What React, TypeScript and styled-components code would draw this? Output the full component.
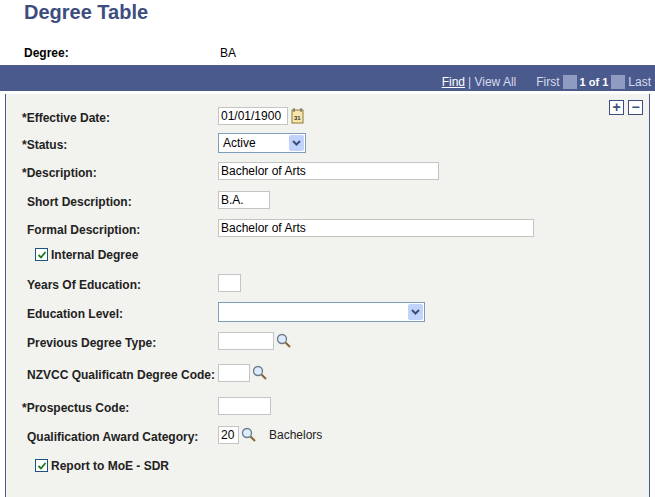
import React from 'react';
import styled, { createGlobalStyle } from 'styled-components';

const Global = createGlobalStyle`
  body { margin: 0; background: #fff; font-family: Arial, "Liberation Sans", sans-serif; font-size: 12px; color: #000; overflow: hidden; }
`;

const Page = styled.div`
  width: 655px;
  height: 497px;
  position: relative;
`;

const Title = styled.h1`
  margin: 0;
  padding: 1px 0 0 24px;
  height: 39px;
  font-size: 20px;
  font-weight: bold;
  color: #3c4d7e;
`;

const KeyRow = styled.div`
  display: flex;
  height: 25px;
  align-items: center;
  padding-left: 24px;
  font-size: 12px;
`;

const KeyLabel = styled.span`
  width: 196px;
  font-weight: bold;
`;

const Panel = styled.div`
  margin: 0 5px 0 5px;
  border: 1px solid #4a5a8c;
  border-top: none;
  background: #f2f2ee;
  height: 404px;
`;

const Bar = styled.div`
  height: 24px;
  background: #4a5a8c;
  display: flex;
  justify-content: flex-end;
  align-items: flex-end;
  padding: 0 4px 2px 0;
  color: #d6dcec;
  font-size: 12px;
  border-bottom: 3px solid #fff;
`;

const Nav = styled.span<{ $gap?: number }>`
  margin-left: ${p => p.$gap ?? 0}px;
  display: inline-flex;
  align-items: center;
  gap: 3px;
  u { color: #fff; font-weight: normal; }
  b { color: #fff; font-size: 11px; }
`;

const Arrow = styled.span`
  display: inline-block;
  width: 14px;
  height: 14px;
  background: #8f9bc0;
`;

const Body = styled.div`
  position: relative;
  padding-top: 9px;
`;

const AddDel = styled.div`
  position: absolute;
  right: 6px;
  top: 6px;
  display: flex;
  gap: 4px;
`;

const SqBtn = styled.span`
  width: 13px;
  height: 13px;
  border: 1px solid #3c4d7e;
  background: #fff;
  color: #3c4d7e;
  font-size: 14px;
  line-height: 12px;
  text-align: center;
  font-weight: bold;
`;

const Row = styled.div<{ $h: number }>`
  display: flex;
  align-items: center;
  height: ${p => p.$h}px;
`;

const Label = styled.div<{ $ind?: boolean }>`
  width: ${p => (p.$ind ? 191 : 196)}px;
  padding-left: ${p => (p.$ind ? 21 : 16)}px;
  font-weight: bold;
  font-size: 12px;
  color: #222;
  padding-top: 4px;
`;

const Input = styled.div<{ $w: number }>`
  width: ${p => p.$w}px;
  height: 18px;
  background: #fff;
  border: 1px solid #c4c4c4;
  box-sizing: border-box;
  font-size: 12px;
  line-height: 16px;
  padding-left: 2px;
`;

const Select = styled.div<{ $w: number }>`
  width: ${p => p.$w}px;
  height: 20px;
  background: #fff;
  border: 1px solid #7f9db9;
  box-sizing: border-box;
  display: flex;
  align-items: center;
  justify-content: space-between;
  padding: 0 1px 0 4px;
  font-size: 12px;
`;

const DropBtn = styled.span`
  width: 15px;
  height: 16px;
  background: #c1d3fb;
  border-radius: 2px;
  display: flex;
  align-items: center;
  justify-content: center;
`;

const Check = styled.div`
  display: flex;
  align-items: center;
  gap: 3px;
  padding-left: 29px;
  font-weight: bold;
  font-size: 12px;
  color: #222;
`;

const Box = styled.span`
  width: 11px;
  height: 11px;
  border: 1px solid #1c5180;
  background: #fff;
  display: flex;
  align-items: center;
  justify-content: center;
`;

const Desc = styled.span`
  margin-left: 12px;
  font-size: 12px;
  color: #222;
`;

const Glass = () => (
  <svg width="16" height="16" viewBox="0 0 16 16" style={{ marginLeft: 2 }}>
    <circle cx="6" cy="6" r="4.5" fill="#dcecfc" stroke="#6a7a8a" strokeWidth="1.3" />
    <line x1="9.5" y1="9.5" x2="14" y2="14" stroke="#8a6a3a" strokeWidth="2.2" />
  </svg>
);

const Cal = () => (
  <svg width="14" height="16" viewBox="0 0 14 16" style={{ marginLeft: 3 }}>
    <rect x="1" y="2" width="11" height="13" fill="#f6e6a8" stroke="#8a7a3a" />
    <line x1="3" y1="0" x2="3" y2="4" stroke="#555" />
    <line x1="10" y1="0" x2="10" y2="4" stroke="#555" />
    <text x="3" y="12" fontSize="6" fontFamily="Arial" fontWeight="bold" fill="#333">31</text>
  </svg>
);

const Chev = () => (
  <svg width="9" height="6" viewBox="0 0 9 6">
    <path d="M1 1 L4.5 4.5 L8 1" fill="none" stroke="#3c4d7e" strokeWidth="2" />
  </svg>
);

const Tick = () => (
  <svg width="10" height="10" viewBox="0 0 10 10">
    <path d="M1.5 5 L4 7.5 L8.5 2" fill="none" stroke="#1b7a1b" strokeWidth="1.8" />
  </svg>
);

const App: React.FC = () => (
  <Page>
    <Global />
    <Title>Degree Table</Title>
    <KeyRow><KeyLabel>Degree:</KeyLabel>BA</KeyRow>
    <Bar>
      <Nav><u>Find</u> | View All</Nav>
      <Nav $gap={20}>First <Arrow /> <b>1 of 1</b> <Arrow /> Last</Nav>
    </Bar>
    <Panel>
      <Body>
        <AddDel><SqBtn>+</SqBtn><SqBtn>−</SqBtn></AddDel>
        <Row $h={26}><Label>*Effective Date:</Label><Input $w={70}>01/01/1900</Input><Cal /></Row>
        <Row $h={28}><Label>*Status:</Label><Select $w={88}>Active<DropBtn><Chev /></DropBtn></Select></Row>
        <Row $h={28}><Label>*Description:</Label><Input $w={221}>Bachelor of Arts</Input></Row>
        <Row $h={29}><Label $ind>Short Description:</Label><Input $w={52}>B.A.</Input></Row>
        <Row $h={28}><Label $ind>Formal Description:</Label><Input $w={316}>Bachelor of Arts</Input></Row>
        <Row $h={25}><Check><Box><Tick /></Box>Internal Degree</Check></Row>
        <Row $h={31}><Label $ind>Years Of Education:</Label><Input $w={23} /></Row>
        <Row $h={28}><Label $ind>Education Level:</Label><Select $w={207}><span /><DropBtn><Chev /></DropBtn></Select></Row>
        <Row $h={30}><Label $ind>Previous Degree Type:</Label><Input $w={56} /><Glass /></Row>
        <Row $h={34}><Label $ind>NZVCC Qualificatn Degree Code:</Label><Input $w={32} /><Glass /></Row>
        <Row $h={31}><Label>*Prospectus Code:</Label><Input $w={53} /></Row>
        <Row $h={28}><Label $ind>Qualification Award Category:</Label><Input $w={21}>20</Input><Glass /><Desc>Bachelors</Desc></Row>
        <Row $h={33}><Check><Box><Tick /></Box>Report to MoE - SDR</Check></Row>
      </Body>
    </Panel>
  </Page>
);

export default App;
